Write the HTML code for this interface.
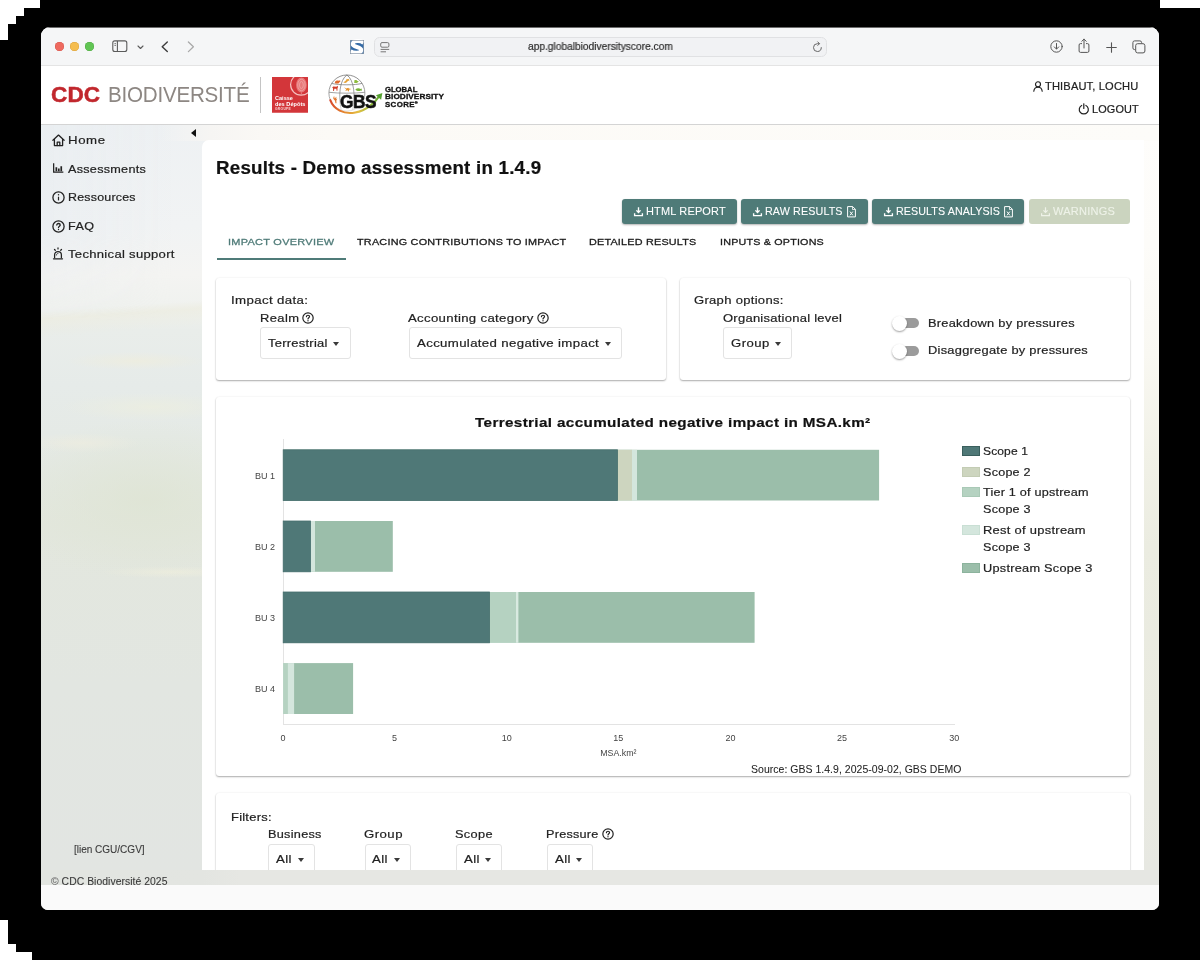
<!DOCTYPE html>
<html><head><meta charset="utf-8"><title>GBS</title>
<style>

*{margin:0;padding:0;box-sizing:border-box}
html,body{width:1200px;height:964px;overflow:hidden;background:#000}
body{position:relative;font-family:"Liberation Sans",sans-serif;color:#222}
.abs{position:absolute}
.w{position:absolute;background:#fff}
#win{position:absolute;left:41px;top:27px;width:1118px;height:882.800px;border-radius:9px 9px 7px 7px;overflow:hidden;background:#fff}
#tb{position:absolute;left:0;top:0;width:1118px;height:39px;background:#f5f6f7;border-top:1px solid #6c6c6c;border-bottom:1px solid #e4e4e4}
#hd{position:absolute;left:0;top:39px;width:1118px;height:59px;background:#fff;border-bottom:1px solid #d4d4d4}
#bg{position:absolute;left:0;top:98px;width:1118px;height:745px;
 background:
  linear-gradient(176deg,rgba(236,235,220,0) 186px,rgba(236,235,220,.55) 194px,rgba(236,235,220,.3) 202px,rgba(236,235,220,0) 212px),
  radial-gradient(ellipse 70px 9px at 95px 236px,rgba(238,237,222,.8),rgba(238,237,222,0)),
  radial-gradient(ellipse 90px 14px at 110px 282px,rgba(236,238,224,.8),rgba(236,238,224,0)),
  radial-gradient(ellipse 60px 10px at 40px 318px,rgba(238,237,224,.7),rgba(238,237,224,0)),
  radial-gradient(ellipse 150px 80px at 105px 375px,rgba(222,228,211,.8),rgba(222,228,211,0)),
  radial-gradient(ellipse 70px 6px at 130px 447px,rgba(238,238,222,.8),rgba(238,238,222,0)),
  linear-gradient(180deg,#eef1f3 0px,#f1f3f4 100px,#f4f4f2 150px,#f0f2ef 180px,#e9edea 205px,#e6ebe9 260px,#e5eae6 310px,#e3e7de 400px,#e2e6e1 560px,#e2e5e2 745px);}
#bgl{position:absolute;left:0;top:98px;width:140px;height:200px;background:linear-gradient(90deg,rgba(231,236,240,.55) 0,rgba(240,243,245,0) 130px);-webkit-mask-image:linear-gradient(180deg,#000 0,#000 110px,transparent 195px);mask-image:linear-gradient(180deg,#000 0,#000 110px,transparent 195px)}
#bgr{position:absolute;left:1102px;top:98px;width:16px;height:745px;background:linear-gradient(180deg,#fefdfb 0,#fdfcf9 120px,#f9f8f2 230px,#f1f1e7 330px,#ebece1 420px,#e9eae0 600px,#e7e8e2 745px)}
#bgtop{position:absolute;left:120px;top:98px;width:998px;height:16px;background:linear-gradient(90deg,rgba(248,246,243,0) 0,#f6f5f3 50px,#faf8f5 100px,#fcfaf6 170px,#fdfcf9 100%)}
#main{position:absolute;left:161px;top:113px;width:942px;height:730px;background:#fff;border-radius:7px 0 0 0}
#ft1{position:absolute;left:41px;top:870px;width:1118px;height:15px;background:linear-gradient(90deg,#e2e5e0 0,#e3e5e1 161px,#e6e7e3 200px,#e6e7e3 100%)}
#ft2{position:absolute;left:41px;top:885px;width:1118px;height:24.800px;background:#fafafa;border-radius:0 0 7px 7px}
.card{position:absolute;background:#fff;border-radius:3px;box-shadow:0 1px 1.800px rgba(0,0,0,.32),0 0 2px rgba(0,0,0,.08)}
.btn{position:absolute;top:198.600px;height:25.300px;border-radius:3px;background:#4f7b78;box-shadow:0 1px 2px rgba(0,0,0,.30)}
.sel{position:absolute;border:1px solid #e3e3e3;border-radius:3px;background:#fff}
.caret{position:absolute;width:0;height:0;border-left:3.800px solid transparent;border-right:3.800px solid transparent;border-top:4px solid #3a3a3a}
.tx{position:absolute;white-space:nowrap;color:#222;transform-origin:0 50%;-webkit-text-stroke:.2px}
svg{position:absolute;overflow:visible}
#texts,#texts2,#ov{will-change:transform}
.bar{position:absolute}
.s1{box-shadow:inset 0 0 0 1px #466f6e}

</style></head>
<body>

<!-- white corner steps of the outer frame -->
<div class="w" style="left:0;top:0;width:40px;height:8px"></div>
<div class="w" style="left:0;top:8px;width:24px;height:8px"></div>
<div class="w" style="left:0;top:16px;width:16px;height:8px"></div>
<div class="w" style="left:0;top:24px;width:8px;height:16px"></div>
<div class="w" style="left:1160px;top:0;width:40px;height:8px"></div>
<div class="w" style="left:0;top:920px;width:8px;height:24px"></div>
<div class="w" style="left:0;top:944px;width:16px;height:8px"></div>
<div class="w" style="left:0;top:952px;width:32px;height:8px"></div>
<div class="w" style="left:0;top:960px;width:1200px;height:4px"></div>

<div id="win">
  <div id="tb"></div>
  <div id="hd"></div>
  <div id="bg"></div>
  <div id="bgl"></div>
  <div id="bgr"></div>
  <div id="bgtop"></div>
  <div id="main"></div>
</div>
<div id="ov">
<!-- ===== browser toolbar ===== -->
<div class="abs" style="left:55.2px;top:41.8px;width:9.1px;height:9.1px;border-radius:50%;background:#ee6a5f;box-shadow:inset 0 0 0 .5px #d5544a"></div>
<div class="abs" style="left:69.9px;top:41.8px;width:9.1px;height:9.1px;border-radius:50%;background:#f5bd4f;box-shadow:inset 0 0 0 .5px #d9a03b"></div>
<div class="abs" style="left:84.6px;top:41.8px;width:9.1px;height:9.1px;border-radius:50%;background:#61c554;box-shadow:inset 0 0 0 .5px #4da73f"></div>
<svg style="left:112px;top:40px" width="16" height="13" viewBox="0 0 16 13" fill="none" stroke="#5b5b5b" stroke-width="1.1"><rect x=".8" y=".9" width="14" height="10.6" rx="2"/><path d="M5.4 1v10.5"/><path d="M2.4 3.6h1.6M2.4 5.4h1.6" stroke-width=".8"/></svg>
<svg style="left:136.5px;top:44.5px" width="7" height="5" viewBox="0 0 7 5" fill="none" stroke="#5b5b5b" stroke-width="1.1" stroke-linecap="round" stroke-linejoin="round"><path d="M1 1l2.5 2.5L6 1"/></svg>
<svg style="left:160.5px;top:40.5px" width="8" height="12" viewBox="0 0 8 12" fill="none" stroke="#3c3c3c" stroke-width="1.4" stroke-linecap="round" stroke-linejoin="round"><path d="M6.3 1L1.2 5.8 6.3 10.6"/></svg>
<svg style="left:187px;top:40.5px" width="8" height="12" viewBox="0 0 8 12" fill="none" stroke="#a9a9a9" stroke-width="1.3" stroke-linecap="round" stroke-linejoin="round"><path d="M1.4 1l5 4.8-5 4.8"/></svg>
<!-- favicon -->
<svg style="left:350px;top:39.5px" width="14" height="14" viewBox="0 0 14 14"><rect width="14" height="14" fill="#356ba6"/><path d="M13.600 2.800C10.500 .3 3.200 .2 2.800 3.900 2.400 7.600 11.400 6.300 11.200 10.100 11 13.600 3.500 13.300 .4 11.200" fill="none" stroke="#fff" stroke-width="4.100"/><rect x=".35" y=".35" width="13.300" height="13.300" fill="none" stroke="#8a98a8" stroke-width=".7"/></svg>
<!-- url field -->
<div class="abs" style="left:373.5px;top:36.5px;width:453px;height:20.5px;border-radius:5.500px;background:#f1f2f4;border:1px solid #e0e1e3"></div>
<svg style="left:379.5px;top:41.5px" width="10" height="11" viewBox="0 0 10 11" fill="none" stroke="#777" stroke-width="1"><rect x=".7" y=".6" width="8.200" height="4.600" rx="1.300"/><path d="M.6 7.400h8.600M.6 9.800h5.400"/></svg>
<svg style="left:811.500px;top:40.500px" width="11" height="12" viewBox="0 0 11 12" fill="none" stroke="#666" stroke-width="1" stroke-linecap="round" stroke-linejoin="round"><path d="M9.300 6.600A3.900 3.900 0 1 1 5.400 2.700h1.800"/><path d="M5.800 .9l1.700 1.800-1.700 1.700"/></svg>
<!-- right icons -->
<svg style="left:1050px;top:40px" width="13" height="13" viewBox="0 0 13 13" fill="none" stroke="#555" stroke-width="1" stroke-linecap="round" stroke-linejoin="round"><circle cx="6.500" cy="6.500" r="5.700"/><path d="M6.500 3.500v5.400M4.300 6.900l2.200 2.200 2.200-2.200"/></svg>
<svg style="left:1077.500px;top:38px" width="12" height="16" viewBox="0 0 12 16" fill="none" stroke="#555" stroke-width="1" stroke-linecap="round" stroke-linejoin="round"><path d="M3.600 5.600H2.500a1.400 1.400 0 0 0-1.400 1.400v6a1.400 1.400 0 0 0 1.400 1.400h7a1.400 1.400 0 0 0 1.400-1.400V7a1.400 1.400 0 0 0-1.400-1.400H8.400"/><path d="M6 10V1.200M3.800 3.300L6 1.100l2.200 2.200"/></svg>
<svg style="left:1105.500px;top:41.500px" width="11" height="11" viewBox="0 0 11 11" fill="none" stroke="#555" stroke-width="1.100" stroke-linecap="round"><path d="M5.500 .7v9.600M.7 5.500h9.600"/></svg>
<svg style="left:1131.500px;top:39.500px" width="14" height="14" viewBox="0 0 14 14" fill="none" stroke="#555" stroke-width="1"><path d="M3.200 9.600H2.600A1.700 1.700 0 0 1 .9 7.900V2.600A1.700 1.700 0 0 1 2.600 .9h5.300a1.700 1.700 0 0 1 1.700 1.700v.6"/><rect x="3.700" y="3.700" width="9.200" height="9.200" rx="1.900"/></svg>
<!-- ===== app header ===== -->
<div class="abs" style="left:260.300px;top:77px;width:1px;height:35.700px;background:#c4c4c4"></div>
<!-- Caisse des Depots -->
<svg style="left:272px;top:77px" width="36" height="35.750" viewBox="0 0 36 35.750">
  <defs><clipPath id="cdcclip"><rect width="36" height="35.750"/></clipPath></defs>
  <rect width="36" height="35.750" fill="#d3363a"/>
  <g clip-path="url(#cdcclip)">
    <circle cx="29.200" cy="7.600" r="10.600" fill="none" stroke="#f5c1c0" stroke-width="1.200"/>
    <ellipse cx="29.400" cy="8" rx="5.300" ry="7.400" fill="#e8797a"/>
    <ellipse cx="29.400" cy="8" rx="3.700" ry="5.700" fill="none" stroke="#f2aaa9" stroke-width=".7"/>
    <ellipse cx="29.400" cy="8" rx="1.900" ry="3.500" fill="none" stroke="#f4b7b6" stroke-width=".6"/>
    <path d="M29.400 15.400v2" stroke="#ee9897" stroke-width=".7"/>
  </g>
</svg>
<!-- GBS logo -->
<svg style="left:320px;top:70px" width="70" height="50" viewBox="320 70 70 50">
  <defs>
    <linearGradient id="sw" x1="329" y1="0" x2="383" y2="0" gradientUnits="userSpaceOnUse">
      <stop offset="0" stop-color="#d8452b"/><stop offset=".3" stop-color="#e58a2e"/><stop offset=".55" stop-color="#e3c043"/><stop offset=".8" stop-color="#8ab63a"/><stop offset="1" stop-color="#56a232"/>
    </linearGradient>
    <linearGradient id="gf" x1="0" y1="75" x2="0" y2="111" gradientUnits="userSpaceOnUse">
      <stop offset="0" stop-color="#6a6a6a"/><stop offset=".6" stop-color="#8a8a8a"/><stop offset=".95" stop-color="#d5d5d5"/>
    </linearGradient>
  </defs>
  <g fill="none" stroke="url(#gf)" stroke-width=".75">
    <circle cx="346.900" cy="93" r="18"/>
    <path d="M346.900 75C339.500 80 338.300 96 341.200 110"/>
    <path d="M346.900 75C354.300 80 355.500 96 352.600 110"/>
    <path d="M331.700 83.400C339 85.300 354.800 85.300 362.100 83.400"/>
    <path d="M329 92.300C339 93.500 354.800 93.500 364.800 92.300"/>
  </g>
  <!-- animals -->
  <path d="M334.800 82.300c.5-1.500 2.400-2.100 4-1.600l1.300-.4.300 1.300-1 .7c-.2.900-.9 1.200-1.900 1.200l-2 .1z" fill="#e06a2c"/>
  <path d="M343.300 82.600l2.300-1.900 1.300-2 .9.500 1.800-.5-.8 1.200 1 1.400-1.600-.5-1.700 1.600-1.200.5z" fill="#e6a53a"/>
  <path d="M354.400 80.200c1.300-.5 2.600 0 3.200.9l1.300.2-.9.700c-.5.900-1.800 1.300-3 1l-.8-.1z" fill="#8dbb3c"/>
  <path d="M332.200 87.500l1-.9 3.300.2.900-1.100.7 1.300-.6.900-.1 2.900h-.8l-.2-2-2.100-.1-.3 2.200h-.8l-.2-2.700z" fill="#cf3d2b"/>
  <path d="M344 87.300l2.300 1.100 1.900-.6.700.8 2.400.3-2.200.9-.3 1.900-1.300-1.400-2.300.6 1-1.400z" fill="#e5932f"/>
  <path d="M355.300 89.400c1.600-1.400 3.900-1.500 5.500-.3l1.100-.5-.2 1.200.3 1-1.200-.4c-1.700 1-3.900.7-5.500-1z" fill="#79b23a"/>
  <path d="M333.600 96.200l1.200 2.600-.1-3 .9 2.400.9-1.600-.3 2.700 1.100-.9-1 2.400.2 2.400h-1l-.5-2.500-1.700-2z" fill="#e2762d"/>
  <!-- swoosh -->
  <path d="M330.300 100.200c3.500 9.300 13.300 14.500 25 12.300 10.700-2 19.700-9.400 24.600-17.200" fill="none" stroke="url(#sw)" stroke-width="2.100" stroke-linecap="round"/>
  <path d="M375.900 95.200l6.500-2.200-1.300 6.700z" fill="#56a232"/>
</svg>
<!-- user icons -->
<svg style="left:1033px;top:80.500px" width="10" height="11" viewBox="0 0 10 11" fill="none" stroke="#222" stroke-width="1.150" stroke-linecap="round"><circle cx="5" cy="3.300" r="2.500"/><path d="M.8 10.200c.3-2.500 2-3.900 4.200-3.900s3.900 1.400 4.200 3.900"/></svg>
<svg style="left:1078px;top:103.300px" width="11.600" height="11.600" viewBox="0 0 11 11" fill="none" stroke="#222" stroke-width="1.150" stroke-linecap="round"><path d="M3.500 2.300a4.300 4.300 0 1 0 4 0"/><path d="M5.500 .8v4.400"/></svg>
<!-- ===== sidebar ===== -->
<div class="abs" style="left:190.800px;top:129px;width:0;height:0;border-top:4px solid transparent;border-bottom:4px solid transparent;border-right:5.200px solid #111"></div>
<!-- home -->
<svg style="left:52.300px;top:133.500px" width="13" height="13" viewBox="0 0 13 13" fill="none" stroke="#222" stroke-width="1.300" stroke-linejoin="round" stroke-linecap="round"><path d="M.9 6.300L6.500 1.100l5.600 5.200"/><path d="M2.400 5.300v6.300h8.200V5.300"/><path d="M5.200 11.600V8.200h2.600v3.400"/></svg>
<!-- chart -->
<svg style="left:52.800px;top:163.200px" width="10.500" height="10" viewBox="0 0 10.500 10" fill="none" stroke="#222" stroke-width="1.250"><path d="M.65 .2v8.800h9.700"/><path d="M3.350 8.300V4.300M5.800 8.300V5.400M8.250 8.300V3.300" stroke-width="1.700"/></svg>
<!-- info -->
<svg style="left:52.300px;top:191px" width="13" height="13" viewBox="0 0 13 13" fill="none" stroke="#222" stroke-width="1.300"><circle cx="6.500" cy="6.500" r="5.600"/><path d="M6.500 5.700v3.700" stroke-width="1.200"/><circle cx="6.500" cy="3.800" r=".75" fill="#222" stroke="none"/></svg>
<!-- faq -->
<svg style="left:52.300px;top:219.500px" width="13" height="13" viewBox="0 0 13 13" fill="none" stroke="#222" stroke-width="1.300" stroke-linecap="round"><circle cx="6.500" cy="6.500" r="5.600"/><path d="M4.800 5.100c0-1 .8-1.600 1.700-1.600 1 0 1.700.6 1.700 1.500 0 1.200-1.700 1.300-1.700 2.600"/><circle cx="6.500" cy="9.500" r=".7" fill="#222" stroke="none"/></svg>
<!-- support (alarm) -->
<svg style="left:53.400px;top:247.300px" width="10" height="13" viewBox="0 0 10 13" fill="none" stroke="#222" stroke-width="1.250" stroke-linecap="round"><path d="M1.600 10.700V7.900a3.400 3.400 0 0 1 6.800 0v2.800"/><path d="M.5 11.800h9" stroke-width="1.300"/><path d="M5 1.900V.9M1.500 2.500l.8.800M8.500 2.500l-.8.800"/><path d="M3.400 8.100c0-.9.700-1.700 1.600-1.700" stroke-width=".8"/></svg>
<!-- ===== action buttons ===== -->
<div class="btn" style="left:622px;width:115px"></div>
<div class="btn" style="left:741px;width:127px"></div>
<div class="btn" style="left:872px;width:152px"></div>
<div class="btn" style="left:1028.500px;width:101px;background:#cbd4bf;box-shadow:none"></div>
<!-- download icons -->
<svg class="dl" style="left:633.8px;top:206.800px" width="9" height="9.400" viewBox="0 0 9 9.400" fill="none" stroke="#fff" stroke-width="1.350"><path d="M4.500 .2v5.300M2.400 3.400l2.100 2.100 2.100-2.100M.6 6.200v2.500h7.800V6.200"/></svg>
<svg class="dl" style="left:753.1px;top:206.800px" width="9" height="9.400" viewBox="0 0 9 9.400" fill="none" stroke="#fff" stroke-width="1.350"><path d="M4.500 .2v5.300M2.400 3.400l2.100 2.100 2.100-2.100M.6 6.200v2.500h7.800V6.200"/></svg>
<svg class="dl" style="left:883.8px;top:206.800px" width="9" height="9.400" viewBox="0 0 9 9.400" fill="none" stroke="#fff" stroke-width="1.350"><path d="M4.500 .2v5.300M2.400 3.400l2.100 2.100 2.100-2.100M.6 6.200v2.500h7.800V6.200"/></svg>
<svg class="dl" style="left:1040.7px;top:206.800px" width="9" height="9.400" viewBox="0 0 9 9.400" fill="none" stroke="#eef2e8" stroke-width="1.200"><path d="M4.500 .2v5.300M2.400 3.400l2.100 2.100 2.100-2.100M.6 6.200v2.500h7.800V6.200"/></svg>
<!-- excel file icons -->
<svg style="left:846.800px;top:205.800px" width="9" height="11.500" viewBox="0 0 9 11.500" fill="none" stroke="#fff" stroke-width="1"><path d="M.6 .6h5.100l2.700 2.700v7.600H.6z"/><path d="M5.500 .7v2.800h2.800" stroke-width=".8"/><path d="M3 5.600l2.800 3.700M5.800 5.600L3 9.300" stroke-width="1"/></svg>
<svg style="left:1003.700px;top:205.800px" width="9" height="11.500" viewBox="0 0 9 11.500" fill="none" stroke="#fff" stroke-width="1"><path d="M.6 .6h5.100l2.700 2.700v7.600H.6z"/><path d="M5.500 .7v2.800h2.800" stroke-width=".8"/><path d="M3 5.600l2.800 3.700M5.800 5.600L3 9.300" stroke-width="1"/></svg>
<!-- tab underline -->
<div class="abs" style="left:216.700px;top:257.900px;width:129.100px;height:2px;background:#4f7b78"></div>

<!-- ===== option cards ===== -->
<div class="card" style="left:216px;top:277.500px;width:450px;height:102px"></div>
<div class="card" style="left:680px;top:277.500px;width:450px;height:102px"></div>
<div class="sel" style="left:260px;top:327px;width:91px;height:32px"></div>
<div class="caret" style="left:333px;top:341.500px"></div>
<div class="sel" style="left:408.800px;top:327px;width:213.500px;height:32px"></div>
<div class="caret" style="left:605px;top:341.500px"></div>
<div class="sel" style="left:723px;top:327px;width:69.200px;height:32px"></div>
<div class="caret" style="left:774.800px;top:341.500px"></div>
<!-- help icons -->
<svg class="q" style="left:302.200px;top:311.600px" width="12" height="12" viewBox="0 0 13 13" fill="none" stroke="#222" stroke-width="1.300" stroke-linecap="round"><circle cx="6.500" cy="6.500" r="5.600"/><path d="M4.800 5.100c0-1 .8-1.600 1.700-1.600 1 0 1.700.6 1.700 1.500 0 1.200-1.700 1.300-1.700 2.600"/><circle cx="6.500" cy="9.500" r=".7" fill="#222" stroke="none"/></svg>
<svg class="q" style="left:536.800px;top:311.500px" width="12" height="12" viewBox="0 0 13 13" fill="none" stroke="#222" stroke-width="1.300" stroke-linecap="round"><circle cx="6.500" cy="6.500" r="5.600"/><path d="M4.800 5.100c0-1 .8-1.600 1.700-1.600 1 0 1.700.6 1.700 1.500 0 1.200-1.700 1.300-1.700 2.600"/><circle cx="6.500" cy="9.500" r=".7" fill="#222" stroke="none"/></svg>
<!-- toggles -->
<div class="abs" style="left:897px;top:318.200px;width:22.300px;height:9.900px;border-radius:5px;background:#9b9b9b"></div>
<div class="abs" style="left:892px;top:315.700px;width:15px;height:15px;border-radius:50%;background:#fff;box-shadow:0 1px 2px rgba(0,0,0,.38)"></div>
<div class="abs" style="left:897px;top:346px;width:22.300px;height:9.900px;border-radius:5px;background:#9b9b9b"></div>
<div class="abs" style="left:892px;top:343.500px;width:15px;height:15px;border-radius:50%;background:#fff;box-shadow:0 1px 2px rgba(0,0,0,.38)"></div>

<!-- ===== chart card ===== -->
<div class="card" style="left:216px;top:396.600px;width:914px;height:379.400px"></div>
<div class="abs" style="left:282.500px;top:439px;width:1px;height:285px;background:#e3e3e3"></div>
<div class="abs" style="left:282.500px;top:723.800px;width:672px;height:1px;background:#e3e3e3"></div>
<!-- bars -->
<svg style="left:0;top:0" width="1200" height="964" viewBox="0 0 1200 964">
<rect x="283.2" y="449.8" width="595.9" height="50.7" fill="#9bbeaa"/>
<rect x="283.2" y="449.8" width="353.8" height="50.7" fill="#d4e6dd"/>
<rect x="283.2" y="449.8" width="348.8" height="50.7" fill="#cdd5bf"/>
<rect x="283.2" y="449.8" width="334.3" height="50.7" fill="#4f7877" stroke="#466f6e" stroke-width=".8"/>
<rect x="283.2" y="521.0" width="109.6" height="50.8" fill="#9bbeaa"/>
<rect x="283.2" y="521.0" width="31.8" height="50.8" fill="#d4e6dd"/>
<rect x="283.2" y="521.0" width="27.3" height="50.8" fill="#4f7877" stroke="#466f6e" stroke-width=".8"/>
<rect x="283.2" y="592.0" width="471.4" height="50.8" fill="#9bbeaa"/>
<rect x="283.2" y="592.0" width="235.2" height="50.8" fill="#d9eae1"/>
<rect x="283.2" y="592.0" width="232.8" height="50.8" fill="#b5d2c1"/>
<rect x="283.2" y="592.0" width="206.3" height="50.8" fill="#4f7877" stroke="#466f6e" stroke-width=".8"/>
<rect x="283.2" y="663.1" width="69.9" height="50.9" fill="#9bbeaa"/>
<rect x="283.2" y="663.1" width="10.9" height="50.9" fill="#d4e6dd"/>
<rect x="283.2" y="663.1" width="4.7" height="50.9" fill="#b5d2c1"/>
</svg>
<!-- legend swatches -->
<div class="abs" style="left:961.900px;top:446px;width:18px;height:10px;background:#4f7877;border:1px solid #3a5f5d"></div>
<div class="abs" style="left:961.900px;top:466.500px;width:18px;height:10px;background:#cdd5bf;border:1px solid #c3ccb4"></div>
<div class="abs" style="left:961.900px;top:486.800px;width:18px;height:10px;background:#b5d2c1;border:1px solid #a9c9b6"></div>
<div class="abs" style="left:961.900px;top:525px;width:18px;height:10px;background:#d4e6dd;border:1px solid #c9dfd4"></div>
<div class="abs" style="left:961.900px;top:562.800px;width:18px;height:10px;background:#9bbeaa;border:1px solid #8cb39d"></div>

<!-- ===== filters card ===== -->
<div class="card" style="left:216px;top:792.600px;width:914px;height:90px"></div>
<div class="sel" style="left:268.300px;top:843.700px;width:46.300px;height:32px"></div>
<div class="caret" style="left:297.500px;top:857.500px"></div>
<div class="sel" style="left:364.600px;top:843.700px;width:46.300px;height:32px"></div>
<div class="caret" style="left:393.800px;top:857.500px"></div>
<div class="sel" style="left:455.800px;top:843.700px;width:46.300px;height:32px"></div>
<div class="caret" style="left:485px;top:857.500px"></div>
<div class="sel" style="left:547px;top:843.700px;width:46.300px;height:32px"></div>
<div class="caret" style="left:576.200px;top:857.500px"></div>
<svg class="q" style="left:601.900px;top:828.100px" width="12" height="12" viewBox="0 0 13 13" fill="none" stroke="#222" stroke-width="1.300" stroke-linecap="round"><circle cx="6.500" cy="6.500" r="5.600"/><path d="M4.800 5.100c0-1 .8-1.600 1.700-1.600 1 0 1.700.6 1.700 1.500 0 1.200-1.700 1.300-1.700 2.600"/><circle cx="6.500" cy="9.500" r=".7" fill="#222" stroke="none"/></svg>
<!--FOOT-->



</div>


<div id="texts">
<span class="tx" id="t0" style="left:50.66px;top:83.01px;font-size:22.3px;line-height:24px;font-weight:bold;color:#c1272d;-webkit-text-stroke:.5px #c1272d;letter-spacing:0.095px;transform:scaleX(1.0118);">CDC</span>
<span class="tx" id="t1" style="left:108.09px;top:83.01px;font-size:21.8px;line-height:24px;color:#8d8783;-webkit-text-stroke:0;letter-spacing:-0.248px;transform:scaleX(0.9454);">BIODIVERSIT&Eacute;</span>
<span class="tx" id="t2" style="left:339.97px;top:93.01px;font-size:18.8px;line-height:18px;font-weight:bold;color:#111;-webkit-text-stroke:.55px #111;letter-spacing:-0.531px;transform:scaleX(0.9196);">GBS</span>
<span class="tx" id="t3" style="left:384.53px;top:85.01px;font-size:7.9px;line-height:9px;font-weight:bold;color:#111;-webkit-text-stroke:.3px #111;letter-spacing:-0.048px;transform:scaleX(0.9781);">GLOBAL</span>
<span class="tx" id="t4" style="left:384.53px;top:92.01px;font-size:7.9px;line-height:9px;font-weight:bold;color:#111;-webkit-text-stroke:.3px #111;letter-spacing:0.074px;transform:scaleX(1.0433);">BIODIVERSITY</span>
<span class="tx" id="t5" style="left:385.00px;top:98.01px;font-size:7.9px;line-height:9px;font-weight:bold;color:#111;letter-spacing:.35px;-webkit-text-stroke:.3px #111;">SCORE<span style="font-size:4px;vertical-align:3px;letter-spacing:0">&reg;</span></span>
<span class="tx" id="t6" style="left:274.68px;top:95.01px;font-size:5.4px;line-height:7px;font-weight:bold;color:#fff;-webkit-text-stroke:0;letter-spacing:0.028px;transform:scaleX(1.0238);">Caisse</span>
<span class="tx" id="t7" style="left:274.68px;top:101.01px;font-size:5.4px;line-height:7px;font-weight:bold;color:#fff;-webkit-text-stroke:0;letter-spacing:0.038px;transform:scaleX(1.0353);">des D&eacute;p&ocirc;ts</span>
<span class="tx" id="t8" style="left:274.84px;top:108.01px;font-size:2.6px;line-height:4px;font-weight:bold;color:#f8d5d4;-webkit-text-stroke:0;letter-spacing:0.228px;transform:scaleX(1.2761);">GROUPE</span>
<span class="tx" id="t9" style="left:528.18px;top:40.01px;font-size:10.4px;line-height:14px;color:#2b2b2b;letter-spacing:-0.026px;transform:scaleX(0.9841);">app.globalbiodiversityscore.com</span>
<span class="tx" id="t10" style="left:1045.28px;top:80.00px;font-size:10.4px;line-height:14px;color:#222;letter-spacing:0.150px;transform:scaleX(1.0669);">THIBAUT, LOCHU</span>
<span class="tx" id="t11" style="left:1091.88px;top:103.00px;font-size:10.4px;line-height:14px;color:#222;letter-spacing:0.143px;transform:scaleX(1.0480);">LOGOUT</span>
<span class="tx" id="t12" style="left:67.51px;top:132.00px;font-size:11.5px;line-height:16px;letter-spacing:0.533px;transform:scaleX(1.1485);">Home</span>
<span class="tx" id="t13" style="left:67.51px;top:161.00px;font-size:11.5px;line-height:16px;letter-spacing:0.235px;transform:scaleX(1.0996);">Assessments</span>
<span class="tx" id="t14" style="left:67.51px;top:189.01px;font-size:11.5px;line-height:16px;letter-spacing:0.188px;transform:scaleX(1.0813);">Ressources</span>
<span class="tx" id="t15" style="left:67.51px;top:218.00px;font-size:11.5px;line-height:16px;letter-spacing:0.371px;transform:scaleX(1.0936);">FAQ</span>
<span class="tx" id="t16" style="left:67.51px;top:246.01px;font-size:11.5px;line-height:16px;letter-spacing:0.265px;transform:scaleX(1.1358);">Technical support</span>
<span class="tx" id="t17" style="left:74.19px;top:844.00px;font-size:10.2px;line-height:12px;color:#3a3a3a;-webkit-text-stroke:.1px;letter-spacing:-0.025px;transform:scaleX(0.9866);">[lien CGU/CGV]</span>
<span class="tx" id="t19" style="left:215.65px;top:156.01px;font-size:17.5px;line-height:24px;font-weight:bold;color:#111;letter-spacing:0.215px;transform:scaleX(1.0702);">Results - Demo assessment in 1.4.9</span>
<span class="tx" id="t20" style="left:227.71px;top:235.00px;font-size:9.9px;line-height:14px;color:#4f7b78;-webkit-text-stroke:.3px;letter-spacing:0.250px;transform:scaleX(1.1097);">IMPACT OVERVIEW</span>
<span class="tx" id="t21" style="left:356.91px;top:235.00px;font-size:9.9px;line-height:14px;color:#1a1a1a;-webkit-text-stroke:.3px;letter-spacing:0.206px;transform:scaleX(1.0974);">TRACING CONTRIBUTIONS TO IMPACT</span>
<span class="tx" id="t22" style="left:589.01px;top:235.00px;font-size:9.9px;line-height:14px;color:#1a1a1a;-webkit-text-stroke:.3px;letter-spacing:0.203px;transform:scaleX(1.0929);">DETAILED RESULTS</span>
<span class="tx" id="t23" style="left:719.81px;top:235.00px;font-size:9.9px;line-height:14px;color:#1a1a1a;-webkit-text-stroke:.3px;letter-spacing:0.184px;transform:scaleX(1.0868);">INPUTS &amp; OPTIONS</span>
<span class="tx" id="t24" style="left:645.98px;top:205.01px;font-size:10.3px;line-height:14px;color:#fff;-webkit-text-stroke:.08px;letter-spacing:0.160px;transform:scaleX(1.0642);">HTML REPORT</span>
<span class="tx" id="t25" style="left:765.28px;top:205.01px;font-size:10.3px;line-height:14px;color:#fff;-webkit-text-stroke:.08px;letter-spacing:0.108px;transform:scaleX(1.0434);">RAW RESULTS</span>
<span class="tx" id="t26" style="left:895.98px;top:205.01px;font-size:10.3px;line-height:14px;color:#fff;-webkit-text-stroke:.08px;letter-spacing:0.089px;transform:scaleX(1.0399);">RESULTS ANALYSIS</span>
<span class="tx" id="t27" style="left:1053.08px;top:205.01px;font-size:10.3px;line-height:14px;color:#eef2e8;-webkit-text-stroke:.08px;letter-spacing:0.199px;transform:scaleX(1.0725);">WARNINGS</span>
<span class="tx" id="t28" style="left:230.71px;top:292.00px;font-size:11.5px;line-height:16px;letter-spacing:0.311px;transform:scaleX(1.1538);">Impact data:</span>
<span class="tx" id="t29" style="left:259.51px;top:310.00px;font-size:11.5px;line-height:16px;letter-spacing:0.359px;transform:scaleX(1.1243);">Realm</span>
<span class="tx" id="t30" style="left:268.31px;top:335.01px;font-size:11.5px;line-height:16px;letter-spacing:0.222px;transform:scaleX(1.1266);">Terrestrial</span>
<span class="tx" id="t31" style="left:408.31px;top:310.00px;font-size:11.5px;line-height:16px;letter-spacing:0.294px;transform:scaleX(1.1451);">Accounting category</span>
<span class="tx" id="t32" style="left:417.11px;top:335.01px;font-size:11.5px;line-height:16px;letter-spacing:0.303px;transform:scaleX(1.1497);">Accumulated negative impact</span>
<span class="tx" id="t33" style="left:694.11px;top:292.00px;font-size:11.5px;line-height:16px;letter-spacing:0.268px;transform:scaleX(1.1325);">Graph options:</span>
<span class="tx" id="t34" style="left:722.51px;top:310.00px;font-size:11.5px;line-height:16px;letter-spacing:0.236px;transform:scaleX(1.1277);">Organisational level</span>
<span class="tx" id="t35" style="left:731.31px;top:335.01px;font-size:11.5px;line-height:16px;letter-spacing:0.388px;transform:scaleX(1.1390);">Group</span>
<span class="tx" id="t36" style="left:928.11px;top:315.01px;font-size:11.5px;line-height:16px;letter-spacing:0.238px;transform:scaleX(1.1141);">Breakdown by pressures</span>
<span class="tx" id="t37" style="left:928.11px;top:342.01px;font-size:11.5px;line-height:16px;letter-spacing:0.233px;transform:scaleX(1.1172);">Disaggregate by pressures</span>
<span class="tx" id="t38" style="left:474.80px;top:414.01px;font-size:13.4px;line-height:18px;font-weight:bold;color:#111;letter-spacing:0.324px;transform:scaleX(1.1371);">Terrestrial accumulated negative impact in MSA.km&sup2;</span>
<span class="tx" id="t39" style="left:255.00px;top:470.01px;font-size:9px;line-height:12px;color:#444;-webkit-text-stroke:0;">BU 1</span>
<span class="tx" id="t40" style="left:255.00px;top:541.01px;font-size:9px;line-height:12px;color:#444;-webkit-text-stroke:0;">BU 2</span>
<span class="tx" id="t41" style="left:255.00px;top:612.01px;font-size:9px;line-height:12px;color:#444;-webkit-text-stroke:0;">BU 3</span>
<span class="tx" id="t42" style="left:255.00px;top:683.00px;font-size:9px;line-height:12px;color:#444;-webkit-text-stroke:0;">BU 4</span>
<span class="tx" id="t43" style="left:280.50px;top:732.01px;font-size:9px;line-height:12px;color:#444;-webkit-text-stroke:0;">0</span>
<span class="tx" id="t44" style="left:392.10px;top:732.01px;font-size:9px;line-height:12px;color:#444;-webkit-text-stroke:0;">5</span>
<span class="tx" id="t45" style="left:501.70px;top:732.01px;font-size:9px;line-height:12px;color:#444;-webkit-text-stroke:0;">10</span>
<span class="tx" id="t46" style="left:613.30px;top:732.01px;font-size:9px;line-height:12px;color:#444;-webkit-text-stroke:0;">15</span>
<span class="tx" id="t47" style="left:725.40px;top:732.01px;font-size:9px;line-height:12px;color:#444;-webkit-text-stroke:0;">20</span>
<span class="tx" id="t48" style="left:837.00px;top:732.01px;font-size:9px;line-height:12px;color:#444;-webkit-text-stroke:0;">25</span>
<span class="tx" id="t49" style="left:949.20px;top:732.01px;font-size:9px;line-height:12px;color:#444;-webkit-text-stroke:0;">30</span>
<span class="tx" id="t50" style="left:600.30px;top:747.00px;font-size:8.8px;line-height:12px;color:#444;-webkit-text-stroke:0;">MSA.km&sup2;</span>
<span class="tx" id="t51" style="left:751.08px;top:763.00px;font-size:10.3px;line-height:13px;color:#222;-webkit-text-stroke:.05px;letter-spacing:0.032px;transform:scaleX(1.0177);">Source: GBS 1.4.9, 2025-09-02, GBS DEMO</span>
<span class="tx" id="t52" style="left:983.11px;top:443.00px;font-size:11.5px;line-height:16px;letter-spacing:0.112px;transform:scaleX(1.0468);">Scope 1</span>
<span class="tx" id="t53" style="left:983.11px;top:464.01px;font-size:11.5px;line-height:16px;letter-spacing:0.224px;transform:scaleX(1.0926);">Scope 2</span>
<span class="tx" id="t54" style="left:983.11px;top:484.01px;font-size:11.5px;line-height:16px;letter-spacing:0.187px;transform:scaleX(1.0991);">Tier 1 of upstream</span>
<span class="tx" id="t55" style="left:983.11px;top:501.00px;font-size:11.5px;line-height:16px;letter-spacing:0.224px;transform:scaleX(1.0926);">Scope 3</span>
<span class="tx" id="t56" style="left:983.11px;top:522.01px;font-size:11.5px;line-height:16px;letter-spacing:0.250px;transform:scaleX(1.1232);">Rest of upstream</span>
<span class="tx" id="t57" style="left:983.11px;top:539.01px;font-size:11.5px;line-height:16px;letter-spacing:0.224px;transform:scaleX(1.0926);">Scope 3</span>
<span class="tx" id="t58" style="left:983.11px;top:560.01px;font-size:11.5px;line-height:16px;letter-spacing:0.235px;transform:scaleX(1.1073);">Upstream Scope 3</span>
<span class="tx" id="t59" style="left:230.61px;top:809.01px;font-size:11.5px;line-height:16px;letter-spacing:0.214px;transform:scaleX(1.1246);">Filters:</span>
<span class="tx" id="t60" style="left:267.61px;top:826.01px;font-size:11.5px;line-height:16px;letter-spacing:0.243px;transform:scaleX(1.1056);">Business</span>
<span class="tx" id="t61" style="left:363.91px;top:826.01px;font-size:11.5px;line-height:16px;letter-spacing:0.407px;transform:scaleX(1.1454);">Group</span>
<span class="tx" id="t62" style="left:455.11px;top:826.01px;font-size:11.5px;line-height:16px;letter-spacing:0.311px;transform:scaleX(1.1101);">Scope</span>
<span class="tx" id="t63" style="left:546.31px;top:826.01px;font-size:11.5px;line-height:16px;letter-spacing:0.227px;transform:scaleX(1.1000);">Pressure</span>
<span class="tx" id="t64" style="left:276.01px;top:851.01px;font-size:11.5px;line-height:16px;letter-spacing:0.337px;transform:scaleX(1.1504);">All</span>
<span class="tx" id="t65" style="left:372.31px;top:851.01px;font-size:11.5px;line-height:16px;letter-spacing:0.337px;transform:scaleX(1.1504);">All</span>
<span class="tx" id="t66" style="left:463.51px;top:851.01px;font-size:11.5px;line-height:16px;letter-spacing:0.337px;transform:scaleX(1.1504);">All</span>
<span class="tx" id="t67" style="left:554.71px;top:851.01px;font-size:11.5px;line-height:16px;letter-spacing:0.337px;transform:scaleX(1.1504);">All</span>
</div>

<div id="ft1"></div>
<div id="ft2"></div>
<!-- re-mask outside window bottom corners -->

<div id="texts2">
<span class="tx" id="t18" style="left:51.39px;top:876.00px;font-size:10.1px;line-height:12px;color:#3a3a3a;-webkit-text-stroke:.1px;letter-spacing:0.046px;transform:scaleX(1.0268);"><span style="color:#6f6f6f">&copy;</span> CDC Biodiversit&eacute; 2025</span>
</div>
</body></html>
